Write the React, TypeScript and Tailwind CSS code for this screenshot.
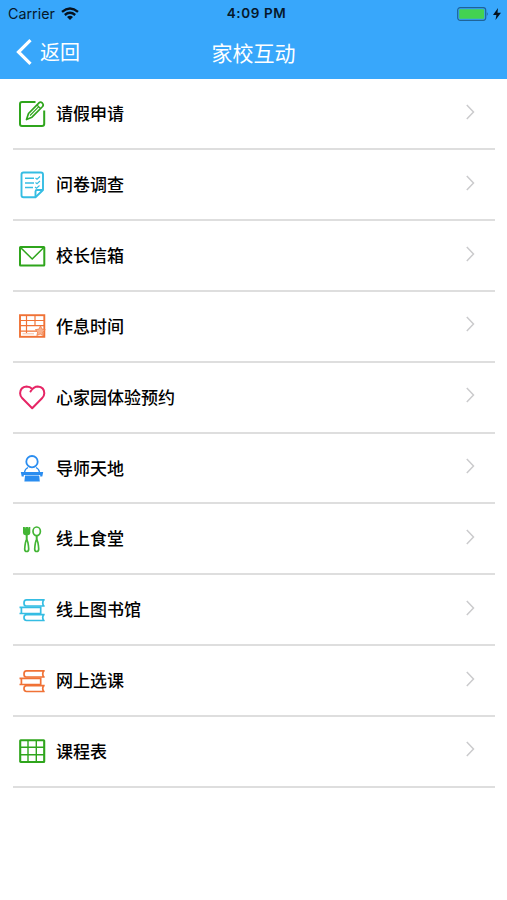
import { ReactNode } from "react";

const PencilIcon = (): ReactNode => (
  <svg viewBox="0 0 32 32" className="size-8" fill="none" stroke="#2fa51c" strokeWidth="2">
    <path d="M19.500 4H6Q4 4 4 6V26Q4 28 6 28H26Q28.200 28 28.200 26V12.500" />
    <path d="M10.500 21.500L12.500 15.500L23 4.800Q24.600 3.600 26.300 5Q28 6.700 26.600 8.500L16 19.200Z" strokeWidth="1.700" strokeLinejoin="round" />
    <path d="M21 7L24.500 10.500M14 17.500L22.500 8.800" strokeWidth="1.100" />
  </svg>
);

const SurveyIcon = (): ReactNode => (
  <svg viewBox="0 0 32 32" className="size-8" fill="none" stroke="#35bde3" strokeWidth="1.900">
    <path d="M19.500 28.200H7.500Q5.500 28.200 5.500 26.200V5.500Q5.500 3.500 7.500 3.500H25Q27 3.500 27 5.500V21Z" strokeLinejoin="round" />
    <path d="M19.500 28V22.500Q19.500 21 21 21H27" />
    <path d="M9 9.300H18M9 14H18M9 18.500H17" strokeWidth="1.500" />
    <path d="M19.500 9L21 10.200L24 7.500M19.500 13.500L21 14.700L24 12M19 18L20.500 19.200L23.500 16.500" strokeWidth="1.100" />
  </svg>
);

const MailIcon = (): ReactNode => (
  <svg viewBox="0 0 32 32" className="size-8" fill="none" stroke="#2fa51c" strokeWidth="2">
    <rect x="4" y="7" width="24.300" height="18.500" rx="0.500" />
    <path d="M4.500 7.500L16.200 19L27.800 7.500" strokeWidth="1.500" />
  </svg>
);

const ScheduleIcon = (): ReactNode => (
  <svg viewBox="0 0 32 32" className="size-8" fill="none" stroke="#f07236" strokeWidth="1.900">
    <rect x="4" y="5.200" width="24.300" height="21.600" />
    <path d="M4 10.500H28M4 15.700H28M4 21.200H21M10.500 5V23M19 5V16" strokeWidth="1.200" />
    <path d="M6.500 23.800H18" strokeWidth="0.800" opacity="0.600" />
    <path
      d="M24.500 15.800L26 19L29.300 19.800L26.800 22L27.500 25.800L24.200 24L20.800 25.500L21.700 22L19.300 19.700L22.900 19.100Z"
      fill="#f8b08c"
      strokeWidth="0.700"
    />
  </svg>
);

const HeartIcon = (): ReactNode => (
  <svg viewBox="0 0 32 32" className="size-8" fill="none" stroke="#e62565" strokeWidth="2" strokeLinejoin="round" strokeLinecap="round">
    <path d="M14.500 10.500Q17.500 5.400 21.800 5.400Q28.300 6 28.300 12.200Q28.300 15 26 17.300L16.200 27.200L6.300 17.200Q4.100 15 4.100 12.200Q4.300 6 10.500 5.400Q14 5.400 16.300 8" />
  </svg>
);

const TutorIcon = (): ReactNode => (
  <svg viewBox="0 0 32 32" className="size-8" fill="none" stroke="#2a8df0" strokeWidth="1.800">
    <circle cx="16" cy="9.700" r="5.700" />
    <path d="M12 15.500Q8.800 17 8.500 20.500M20 15.500Q23.200 17 23.500 20.500" strokeWidth="1.300" />
    <path d="M4.800 20H27.200L26.300 24.400H24.200V22.900H7.800V24.400H5.700Z" fill="#2a8df0" stroke="none" />
    <path d="M9 23.400H23.200L23.800 29.600H8.400Z" fill="#2a8df0" stroke="none" />
  </svg>
);

const CanteenIcon = (): ReactNode => (
  <svg viewBox="0 0 32 32" className="size-8" fill="none" stroke="#43b535" strokeWidth="1.700">
    <path d="M7 4H8.900V5.200H9.300V4H12V5.200H12.400V4H14.300V10Q14.300 11.800 12 12.200H9.300Q7 11.800 7 10Z" fill="#43b535" stroke="none" />
    <path d="M10.700 12V18" strokeWidth="2" />
    <path d="M10.700 17Q9.200 18 8.700 26Q8.700 28.500 10.700 28.500Q12.700 28.500 12.700 26Q12.200 18 10.700 17Z" />
    <ellipse cx="20.700" cy="8.300" rx="3.700" ry="4.300" />
    <path d="M20.700 12.500V18" strokeWidth="2" />
    <path d="M20.700 17Q19.200 18 18.700 26Q18.700 28.500 20.700 28.500Q22.700 28.500 22.700 26Q22.200 18 20.700 17Z" />
  </svg>
);

const BooksIcon = ({ className }: { className: string }): ReactNode => (
  <svg viewBox="0 0 32 32" className={`size-8 ${className}`} fill="none" stroke="currentColor" strokeWidth="1.700">
    <path d="M28.700 5.800H10.500Q8 5.800 8 9Q8 12 10 12H28.700M27.300 5.800L26.700 9L27.300 12" />
    <path d="M3.500 13.300H25.500M5.400 13.300V19.500M3.500 19.500H25.500M24.700 13.300V19.500" />
    <path d="M28.700 20.600H10.500Q8 20.600 8 23.600Q8 26.500 10.500 26.500H28.700M27.300 20.600L26.700 23.600L27.300 26.500" />
  </svg>
);

const TimetableIcon = (): ReactNode => (
  <svg viewBox="0 0 32 32" className="size-8" fill="none" stroke="#2fa51c" strokeWidth="2.100">
    <rect x="4.200" y="5.200" width="24" height="21.800" rx="0.500" />
    <path d="M12 5V27M20.300 5V27M4 12.300H28M4 19.800H28" strokeWidth="1.400" />
  </svg>
);

const MENU: { label: string; icon: ReactNode }[] = [
  { label: "请假申请", icon: <PencilIcon /> },
  { label: "问卷调查", icon: <SurveyIcon /> },
  { label: "校长信箱", icon: <MailIcon /> },
  { label: "作息时间", icon: <ScheduleIcon /> },
  { label: "心家园体验预约", icon: <HeartIcon /> },
  { label: "导师天地", icon: <TutorIcon /> },
  { label: "线上食堂", icon: <CanteenIcon /> },
  { label: "线上图书馆", icon: <BooksIcon className="text-[#35bde3]" /> },
  { label: "网上选课", icon: <BooksIcon className="text-[#f07236]" /> },
  { label: "课程表", icon: <TimetableIcon /> },
];

const StatusBar = (): ReactNode => (
  <div className="grid grid-cols-3 items-center h-7 pl-2 pr-1.5 font-[Inter,sans-serif] text-[#06182a]">
    <div className="flex items-center gap-1.5">
      <span className="text-[14.300px] leading-none">Carrier</span>
      <svg viewBox="0 0 18 13" className="w-[18px] h-[13px]" fill="none" stroke="#06121e" strokeWidth="2.400">
        <path d="M1 4.800Q9 -2 17 4.800" />
        <path d="M3.800 8Q9 3.700 14.200 8" />
        <path d="M6 10.100Q9 7.600 12 10.100L9 13Z" fill="#06121e" stroke="none" />
      </svg>
    </div>
    <span className="pl-1 text-center text-[13.500px] leading-none font-semibold tracking-[0.600px] whitespace-nowrap">4:09 PM</span>
    <div className="flex items-center justify-end gap-1">
      <svg viewBox="0 0 32 14" className="w-8 h-3.5">
        <rect x="0.700" y="0.700" width="28" height="12.600" rx="2.500" fill="none" stroke="#1f6398" strokeWidth="1.200" />
        <rect x="2.200" y="2.200" width="25" height="9.600" rx="1" fill="#43d251" />
        <path d="M29.900 5Q31.700 7 29.900 9Z" fill="#1f6398" />
      </svg>
      <svg viewBox="0 0 8 12" className="w-2 h-3" fill="#06121e">
        <path d="M5 0L0 7H3.400L2.500 12L8 4.800H4.500Z" />
      </svg>
    </div>
  </div>
);

const App = (): ReactNode => {
  return (
    <div className="min-h-screen bg-white font-['Noto_Sans_CJK_SC',sans-serif]">
      <header className="h-[79.400px] bg-[#38a7fb]">
        <StatusBar />
        <div className="grid grid-cols-3 items-center h-12 px-4 text-white">
          <button className="flex items-center gap-2 text-[20px] leading-none font-normal">
            <svg viewBox="0 0 16 26" className="w-4 h-[26px]" fill="none" stroke="#fff" strokeWidth="3.200">
              <path d="M14.500 1.200L2.500 13L14.500 24.800" />
            </svg>
            返回
          </button>
          <p className="text-center text-[21px] leading-none font-normal">家校互动</p>
        </div>
      </header>
      <ul className="pl-[13px] pr-3">
        {MENU.map((item) => (
          <li key={item.label} className="flex items-center h-[70.850px] pl-[3px] pr-5 border-b-2 border-[#dedede]">
            {item.icon}
            <span className="ml-2 pb-0.5 text-[17px] leading-none font-medium text-black">{item.label}</span>
            <svg viewBox="0 0 9 16" className="w-[9px] h-4 ml-auto mb-1" fill="none" stroke="#cbcbcd" strokeWidth="1.500">
              <path d="M0.800 1L7.500 8L0.800 15" />
            </svg>
          </li>
        ))}
      </ul>
    </div>
  );
};

export default App;
